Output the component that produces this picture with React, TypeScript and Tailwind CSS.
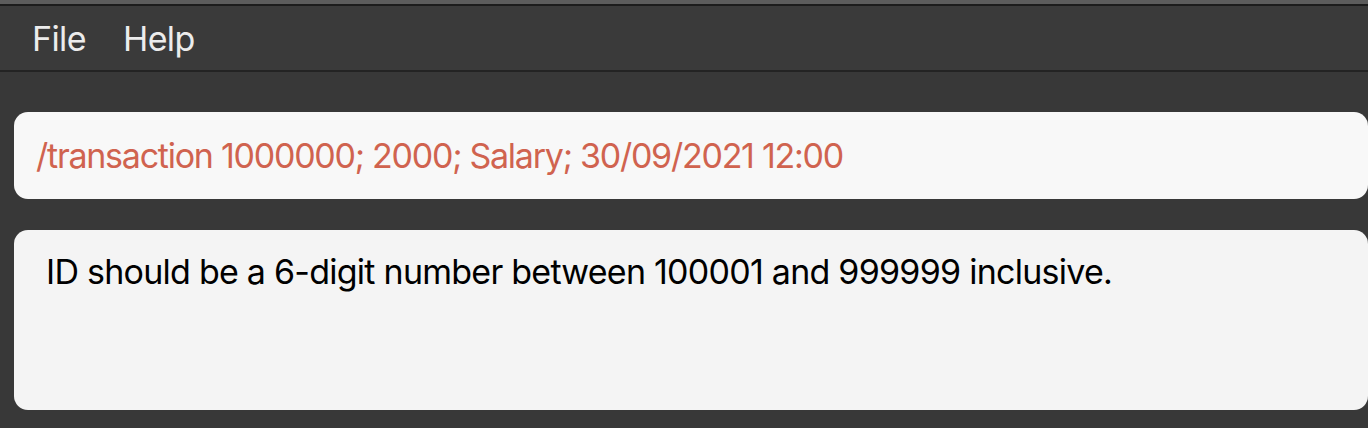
export default function App() {
  return (
    <div className="w-[1368px] h-[428px] bg-[#383838] overflow-hidden flex flex-col" style={{ fontFamily: 'Inter, "Noto Sans", sans-serif' }}>
      <div className="h-[4px] bg-[#5c5c5c]" />
      <div className="h-[2px] bg-[#1c1c1c]" />
      <div className="h-[64px] bg-[#3a3a3a] flex items-center pl-[32px] gap-[37px] text-[34px] tracking-[-0.6px] text-[#ececec]">
        <span>File</span>
        <span>Help</span>
      </div>
      <div className="h-[2px] bg-[#232323]" />
      <div className="pt-[40px] pl-[14px] flex flex-col gap-[31px]">
        <div className="w-[1354px] h-[87px] rounded-[14px] bg-[#f8f8f8] flex items-center pl-[22px] text-[34px] tracking-[-1.25px] text-[#d0634f]">
          /transaction 1000000; 2000; Salary; 30/09/2021 12:00
        </div>
        <div className="w-[1354px] h-[180px] rounded-[14px] bg-[#f4f4f4] pl-[32px] pt-[16px] text-[34px] tracking-[-0.75px] text-black">
          ID should be a 6-digit number between 100001 and 999999 inclusive.
        </div>
      </div>
    </div>
  );
}
